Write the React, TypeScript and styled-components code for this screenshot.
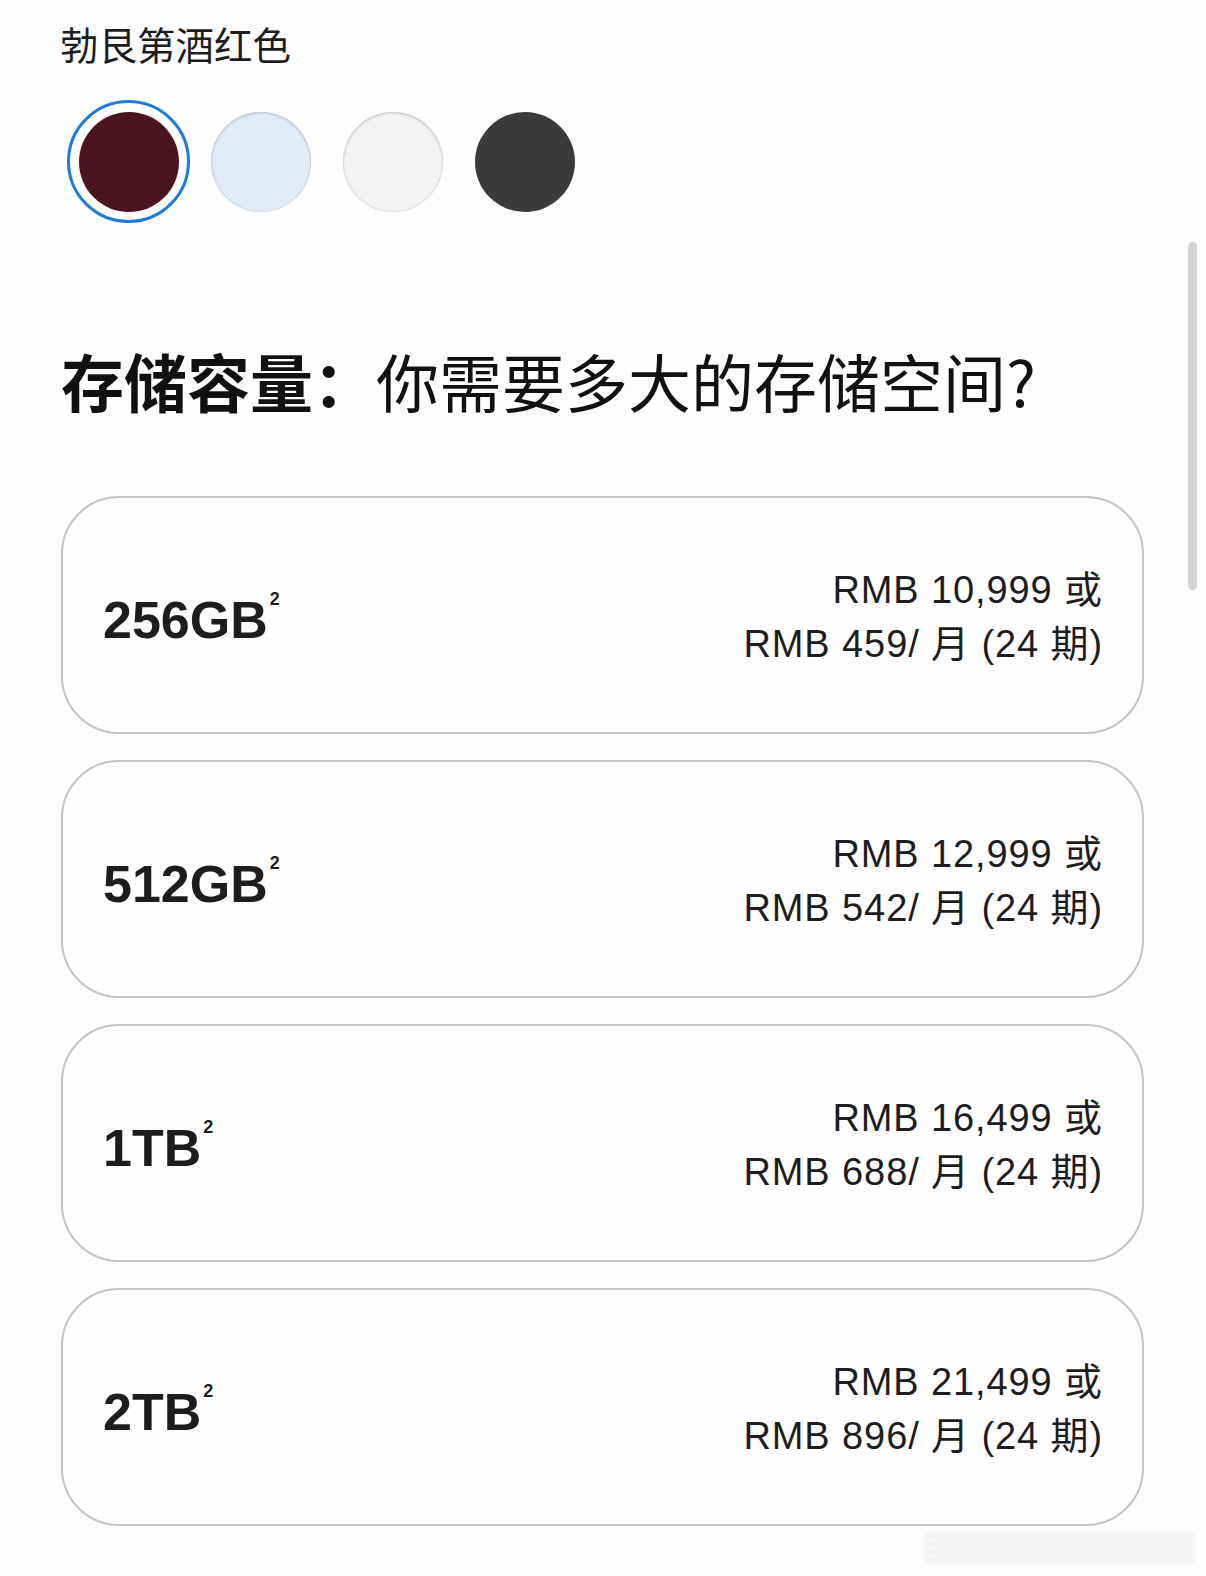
import { useState } from "react";
import styled, { createGlobalStyle } from "styled-components";

type Finish = {
  id: string;
  name: string;
  color: string;
  inset?: boolean;
};

type StorageOption = {
  size: string;
  price: string;
  monthly: string;
};

const finishes: Finish[] = [
  { id: "burgundy", name: "勃艮第酒红色", color: "#4a1520" },
  { id: "blue", name: "天蓝色", color: "#e1ebf8", inset: true },
  { id: "white", name: "白色", color: "#f3f3f3", inset: true },
  { id: "black", name: "深空黑色", color: "#3b3b3b" },
];

const storageOptions: StorageOption[] = [
  { size: "256GB", price: "10,999", monthly: "459" },
  { size: "512GB", price: "12,999", monthly: "542" },
  { size: "1TB", price: "16,499", monthly: "688" },
  { size: "2TB", price: "21,499", monthly: "896" },
];

const GlobalStyle = createGlobalStyle`
  html, body {
    margin: 0;
    padding: 0;
    background: #fdfdfd;
  }
  body {
    font-family: "Liberation Sans", "Noto Sans CJK SC", sans-serif;
    color: #1d1d1f;
  }
`;

const Page = styled.main`
  position: relative;
  min-height: 1576px;
  padding: 20px 62px 0 60px;
  box-sizing: border-box;
`;

const FinishName = styled.div`
  font-family: "Noto Sans CJK SC", sans-serif;
  font-size: 38.5px;
  line-height: 46px;
  color: #1d1d1f;
`;

const SwatchRow = styled.div`
  display: flex;
  gap: 9px;
  margin: 34px 0 0 7px;
`;

const SwatchButton = styled.button<{ $selected: boolean }>`
  display: flex;
  align-items: center;
  justify-content: center;
  width: 123px;
  height: 123px;
  padding: 0;
  border-radius: 50%;
  background: transparent;
  border: 3px solid ${(p) => (p.$selected ? "#1f7bd8" : "transparent")};
  box-sizing: border-box;
  cursor: pointer;
`;

const SwatchDot = styled.span<{ $color: string; $inset?: boolean }>`
  display: block;
  width: 100px;
  height: 100px;
  border-radius: 50%;
  background: ${(p) => p.$color};
  box-shadow: ${(p) =>
    p.$inset
      ? "inset 0 1px 3px rgba(0, 0, 0, 0.2), inset 0 0 1px rgba(0, 0, 0, 0.2)"
      : "none"};
`;

const Heading = styled.h2`
  margin: 120px 0 0 1px;
  font-family: "Noto Sans CJK SC", sans-serif;
  font-size: 63px;
  line-height: 74px;
  font-weight: 400;
  color: #111;

  strong {
    font-weight: 700;
  }
`;

const OptionList = styled.div`
  display: flex;
  flex-direction: column;
  gap: 26px;
  margin: 79px 0 0 1px;
`;

const OptionCard = styled.button`
  display: flex;
  align-items: center;
  justify-content: space-between;
  height: 238px;
  padding: 0 39px 0 40px;
  border: 2px solid #c4c4c8;
  border-radius: 58px;
  background: #fefefe;
  box-sizing: border-box;
  text-align: left;
  cursor: pointer;
  font-family: inherit;
  color: #1d1d1f;
`;

const SizeLabel = styled.span`
  font-family: "Liberation Sans", sans-serif;
  font-size: 52px;
  font-weight: 700;
  line-height: 1;
  margin-top: 9px;

  sup {
    font-size: 18px;
    font-weight: 700;
    margin-left: 2px;
    vertical-align: 33px;
    line-height: 0;
  }
`;

const PriceBlock = styled.span`
  display: flex;
  flex-direction: column;
  align-items: flex-end;
  font-size: 38px;
  line-height: 54px;
  letter-spacing: 0.9px;
  margin-top: 3px;
`;

const Scrollbar = styled.div`
  position: absolute;
  top: 242px;
  right: 9px;
  width: 9px;
  height: 348px;
  border-radius: 5px;
  background: #d3d3d3;
`;

const Watermark = styled.div`
  position: absolute;
  right: 12px;
  bottom: 14px;
  width: 270px;
  height: 28px;
  background: repeating-linear-gradient(
    180deg,
    rgba(140, 140, 140, 0.16) 0 4px,
    rgba(255, 255, 255, 0) 4px 8px
  );
  filter: blur(2.5px);
`;

export default function App() {
  const [finish, setFinish] = useState(finishes[0].id);
  const current = finishes.find((f) => f.id === finish) ?? finishes[0];

  return (
    <>
      <GlobalStyle />
      <Page>
        <FinishName>{current.name}</FinishName>
        <SwatchRow>
          {finishes.map((f) => (
            <SwatchButton
              key={f.id}
              $selected={f.id === finish}
              onClick={() => setFinish(f.id)}
              aria-label={f.name}
            >
              <SwatchDot $color={f.color} $inset={f.inset} />
            </SwatchButton>
          ))}
        </SwatchRow>

        <Heading>
          <strong>存储容量：</strong>你需要多大的存储空间?
        </Heading>

        <OptionList>
          {storageOptions.map((o) => (
            <OptionCard key={o.size}>
              <SizeLabel>
                {o.size}
                <sup>2</sup>
              </SizeLabel>
              <PriceBlock>
                <span>RMB {o.price} 或</span>
                <span>RMB {o.monthly}/ 月 (24 期)</span>
              </PriceBlock>
            </OptionCard>
          ))}
        </OptionList>

        <Scrollbar />
        <Watermark />
      </Page>
    </>
  );
}
